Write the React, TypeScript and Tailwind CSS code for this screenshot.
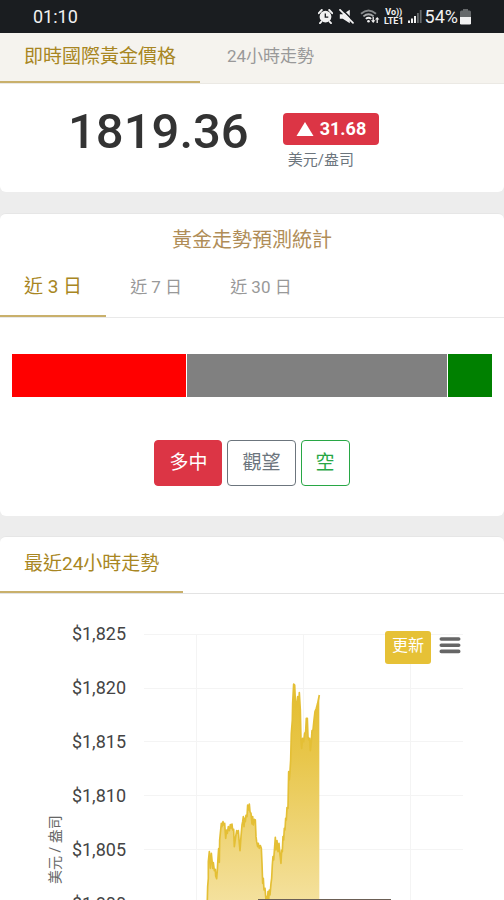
import { useState } from "react";
import clsx from "clsx";

const PRICE_TICKS = ["$1,825", "$1,820", "$1,815", "$1,810", "$1,805", "$1,800"];

const FORECAST = [
  { key: "long", share: 174, color: "bg-[#ff0000]" },
  { key: "hold", share: 260, color: "bg-[#808080]" },
  { key: "short", share: 44, color: "bg-[#008000]" },
];

const SERIES =
  "50,760 52,690 53,650 55,625 55,575 58,545 61,595 64,550 66,570 68,595 70,578 73,602 76,598 77,618 80,626 82,600 84,565 86,536 88,577 89,510 92,480 94,460 96,470 99,455 101,465 104,460 107,505 110,480 112,490 115,470 118,482 121,464 123,474 126,462 128,480 131,478 133,530 137,500 140,482 143,490 145,482 148,520 150,542 153,500 156,465 158,455 160,440 162,470 164,445 166,455 168,436 171,440 173,405 176,420 178,402 180,425 183,430 186,462 188,440 190,465 193,448 196,450 198,500 200,515 203,530 205,520 208,535 211,527 214,535 216,580 218,640 220,625 222,660 225,655 228,690 230,680 232,700 234,665 236,690 238,660 240,675 243,640 245,625 247,585 249,560 251,570 254,530 256,502 258,540 261,512 264,545 267,520 270,555 273,580 275,540 277,545 279,500 281,510 283,475 285,480 287,445 289,450 291,413 294,415 296,305 298,330 300,305 302,270 304,190 307,150 308,100 311,42 314,45 317,112 320,105 323,80 326,105 328,68 331,120 333,210 335,235 338,205 341,215 344,190 347,185 349,145 352,145 354,200 357,210 359,205 361,242 364,215 366,182 369,180 372,150 375,125 379,115 383,100 388,75";

export default function App() {
  return (
    <div className="relative flex h-screen flex-col overflow-hidden bg-[#ededed] font-['Roboto','Noto_Sans_CJK_TC',sans-serif] text-[#333333]">
      <StatusBar />
      <PriceSection />
      <ForecastSection />
      <TrendSection />
      {/* home indicator peeking in */}
      <div className="absolute bottom-0 left-[258px] h-px w-[133px] bg-[#6b5f55]" />
    </div>
  );
}

function StatusBar() {
  return (
    <header className="flex h-[33px] shrink-0 items-center justify-between bg-[#1a1d20] px-[33px] text-lg leading-none text-[#f1f1f1]">
      <span>01:10</span>
      <div className="flex items-center">
        <svg width="15" height="15" viewBox="0 0 15 15" className="mr-[6px]" aria-hidden="true">
          <circle cx="7.5" cy="7.7" r="5.9" fill="#f1f1f1" />
          <path d="M.8 4.2 3.8 1M14.2 4.2 11.2 1M3.4 12.6 2 14.2M11.6 12.6 13 14.2" stroke="#f1f1f1" strokeWidth="1.9" strokeLinecap="round" />
          <path d="M7.3 4.4v3.8h3" fill="none" stroke="#1a1d20" strokeWidth="1.3" />
        </svg>
        <svg width="15" height="15" viewBox="0 0 15 15" className="mr-[6px]" aria-hidden="true">
          <path d="M.8 5.2h3l7-4.4v13.4l-7-4.4h-3z" fill="#f1f1f1" />
          <path d="M2.4-.2 15.4 12.8" stroke="#1a1d20" strokeWidth="1.6" />
          <path d="M1 .8 14 13.8" stroke="#f1f1f1" strokeWidth="1.7" strokeLinecap="round" />
        </svg>
        <svg width="20" height="15" viewBox="0 0 20 15" className="mr-[4px]" fill="none" aria-hidden="true">
          <path d="M1 4.8Q8.5-1.8 16 4.8" stroke="#85888a" strokeWidth="1.8" />
          <path d="M3.4 7.4Q8.5 3 13.6 7.4" stroke="#a7a9aa" strokeWidth="1.8" />
          <path d="M5.8 9.9Q8.5 7.6 11.2 9.9" stroke="#f1f1f1" strokeWidth="1.7" />
          <circle cx="8.5" cy="12.2" r="1.3" fill="#f1f1f1" />
          <path d="M13.2 8v4M17.2 10v4" stroke="#f1f1f1" strokeWidth="1.3" />
          <path d="M11 11.3h4.4L13.2 14zM15 10.6h4.4L17.2 8z" fill="#f1f1f1" />
        </svg>
        <div className="mr-[4px] text-center text-[9px] leading-[9px] font-bold">
          <div>Vo))</div>
          <div>LTE1</div>
        </div>
        <svg width="14" height="15" viewBox="0 0 14 15" className="mr-[3px]" aria-hidden="true">
          <path d="M0 11.5h2V14H0zM3 9.5h2V14H3zM6 7h2v7H6z" fill="#f1f1f1" />
          <path d="M9 4h1.8v10H9zM11.8 1h1.8v13h-1.8z" fill="#666a6c" />
        </svg>
        <span className="mr-[2px]">54%</span>
        <svg width="11" height="16" viewBox="0 0 11 16" aria-hidden="true">
          <path d="M3 0h5v1.5h1.5Q11 1.5 11 3v5H0V3q0-1.5 1.5-1.5H3z" fill="#66696b" />
          <path d="M0 8h11v6.2q0 1.3-1.3 1.3H1.3Q0 15.5 0 14.2z" fill="#f1f1f1" />
        </svg>
      </div>
    </header>
  );
}

function PriceSection() {
  const [tab, setTab] = useState("now");
  return (
    <section className="shrink-0">
      <nav className="flex h-[51px] gap-[3px] border-b border-[#ebe9e4] bg-[#f5f3ee]">
        <Tab active={tab === "now"} onClick={() => setTab("now")}>即時國際黃金價格</Tab>
        <Tab active={tab === "day"} onClick={() => setTab("day")}>24小時走勢</Tab>
      </nav>
      <div className="flex h-[108px] items-start gap-[34px] rounded-b-md bg-white pt-[18px] pl-[68px]">
        <strong className="text-[49px] leading-[60px] font-medium">1819.36</strong>
        <div className="pt-[11px]">
          <div className="flex h-8 items-center gap-[6px] rounded bg-[#dc3545] px-[13px] text-lg leading-none font-bold text-white">
            <svg width="18" height="14" viewBox="0 0 18 14" aria-hidden="true">
              <path d="M9 0 17.5 14H.5z" fill="currentColor" />
            </svg>
            31.68
          </div>
          <div className="pl-[5px] text-[15px] leading-[30px] text-[#6c757d]">美元/盎司</div>
        </div>
      </div>
    </section>
  );
}

function ForecastSection() {
  const [range, setRange] = useState(3);
  return (
    <section className="mt-[21px] shrink-0 rounded-md border-t border-[#e6e6e6] bg-white pb-[30px]">
      <h2 className="pt-3 text-center text-xl leading-[28px] text-[#b08d57]">黃金走勢預測統計</h2>
      <nav className="mt-[6px] flex h-[58px] border-b border-[#e9e9e9]">
        {[3, 7, 30].map((days) => (
          <Tab key={days} active={range === days} onClick={() => setRange(days)}>
            近 {days} 日
          </Tab>
        ))}
      </nav>
      <div className="mx-3 mt-9 flex h-[43px] gap-px">
        {FORECAST.map((f) => (
          <div key={f.key} className={f.color} style={{ flexGrow: f.share }} />
        ))}
      </div>
      <div className="mt-[43px] flex justify-center gap-[5px] text-[19px] leading-[28px]">
        <button className="h-[46px] rounded border border-[#dc3545] bg-[#dc3545] px-[14px] text-white">多中</button>
        <button className="h-[46px] rounded border border-[#6c757d] px-[14px] text-[#6c757d]">觀望</button>
        <button className="h-[46px] rounded border border-[#28a745] px-[14px] text-[#28a745]">空</button>
      </div>
    </section>
  );
}

function TrendSection() {
  return (
    <section className="mt-5 shrink-0 rounded-t-md border-t border-[#e6e6e6] bg-white">
      <nav className="flex h-[57px] border-b border-[#e3e3e3]">
        <Tab active>最近24小時走勢</Tab>
      </nav>
      <div className="relative flex pt-[13px] pr-[41px] pl-[45px]">
        <div className="flex w-5 shrink-0 justify-center pt-[143px] text-sm leading-5 text-[#666666]">
          <span className="h-[200px] rotate-180 text-center whitespace-nowrap [text-orientation:sideways] [writing-mode:vertical-rl]">
            美元 / 盎司
          </span>
        </div>
        <div className="w-[61px] shrink-0 text-right text-lg leading-[54px] text-[#444444]">
          {PRICE_TICKS.map((t) => (
            <div key={t}>{t}</div>
          ))}
        </div>
        <div className="min-w-0 flex-1 pl-[18px]">
          <TrendChart />
        </div>
        <div className="absolute top-[37px] right-[43px] flex items-start gap-2">
          <button className="h-[33px] rounded-[3px] bg-[#e6c136] px-[7px] pb-[3px] text-base leading-[28px] text-white">更新</button>
          <button aria-label="選單" className="mt-[6px]">
            <svg width="22" height="18" viewBox="0 0 22 18" aria-hidden="true">
              <path d="M2.3 2h17.4M2.3 8.2h17.4M2.3 14.4h17.4" stroke="#666666" strokeWidth="3.6" strokeLinecap="round" />
            </svg>
          </button>
        </div>
      </div>
    </section>
  );
}

function TrendChart() {
  return (
    <svg className="block h-[324px] w-full" viewBox="0 0 319 324" preserveAspectRatio="none" aria-hidden="true">
      <defs>
        <linearGradient id="gold" gradientUnits="userSpaceOnUse" x1="0" y1="42" x2="0" y2="760">
          <stop offset="0" stopColor="#e4bd2c" />
          <stop offset="0.3" stopColor="#e8c64a" />
          <stop offset="1" stopColor="#f6e5aa" />
        </linearGradient>
      </defs>
      <path d="M0 27.5h319M0 81.5h319M0 134.5h319M0 188.5h319M0 242.5h319M0 296.5h319M52.5 27v297M159.5 27v297M266.5 27v297" stroke="#f4f4f4" />
      <g transform="translate(46 63) scale(.3333)">
        <polygon points={`${SERIES} 388,760`} fill="url(#gold)" />
        <polyline points={SERIES} fill="none" stroke="#e4bf35" strokeWidth="5" strokeLinejoin="round" />
      </g>
    </svg>
  );
}

function Tab({
  active,
  onClick,
  children,
}: {
  active: boolean;
  onClick?: () => void;
  children: React.ReactNode;
}) {
  return (
    <button
      onClick={onClick}
      className={clsx(
        "border-b-2 px-6 whitespace-nowrap",
        active ? "border-[#c9b06b] text-[19px] text-[#a88622]" : "border-transparent text-[17px] text-[#999999]"
      )}
    >
      {children}
    </button>
  );
}
